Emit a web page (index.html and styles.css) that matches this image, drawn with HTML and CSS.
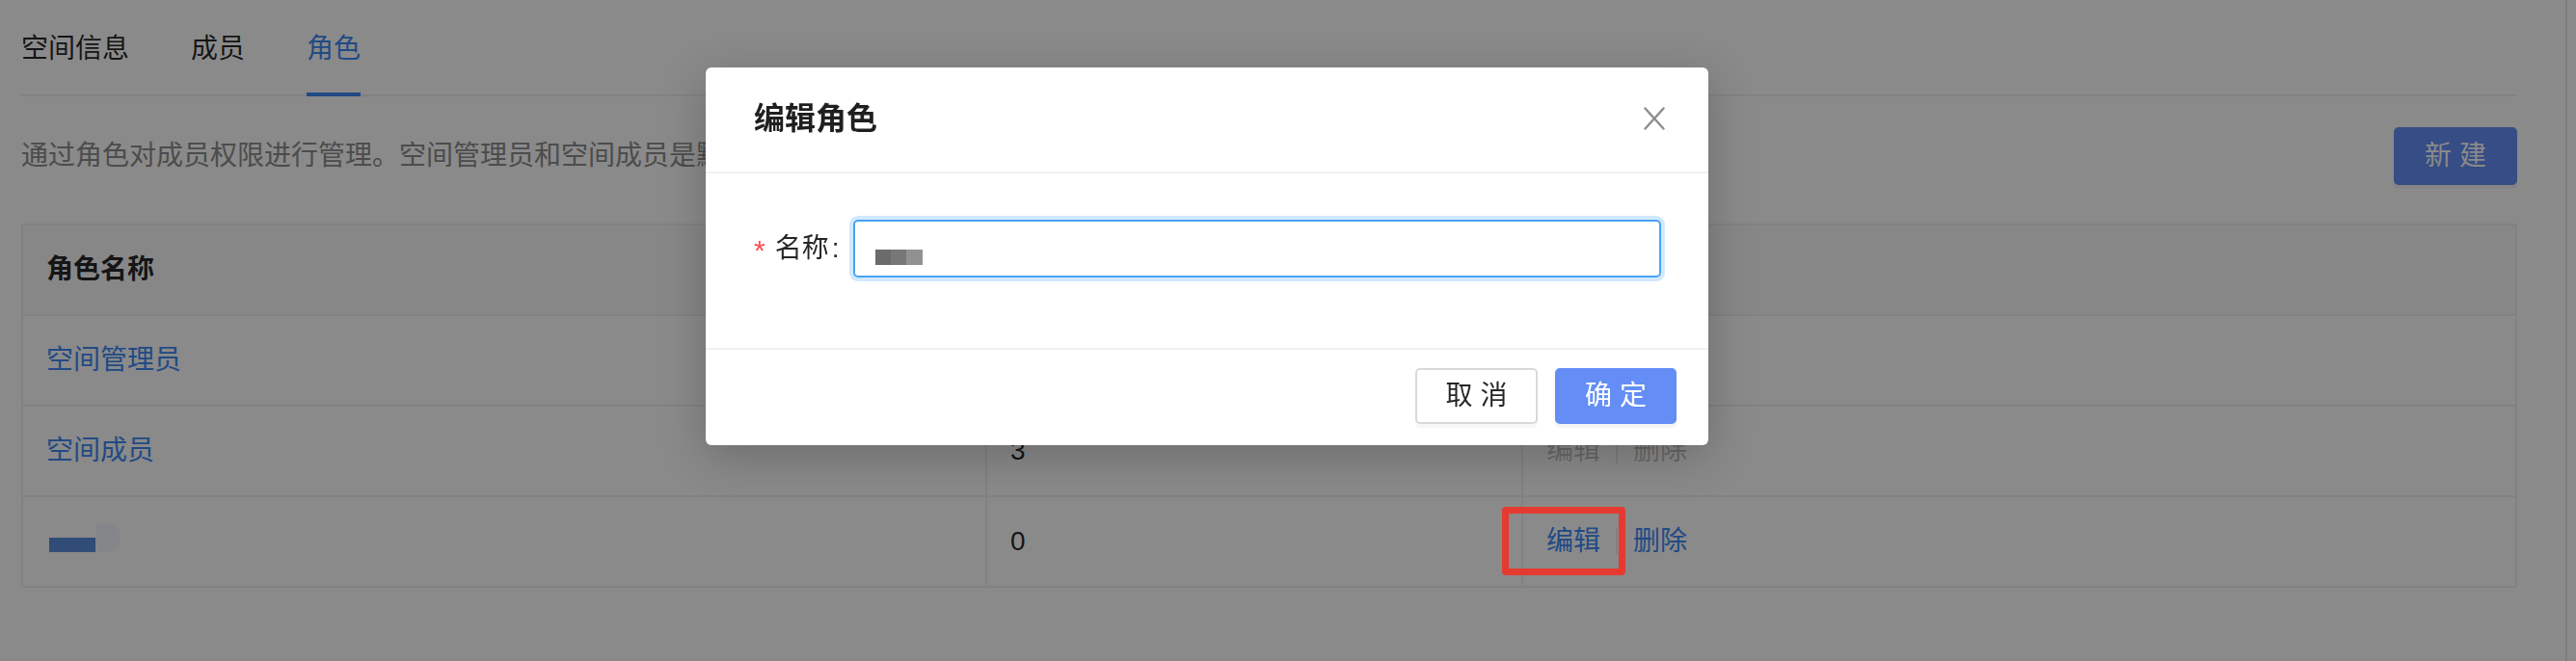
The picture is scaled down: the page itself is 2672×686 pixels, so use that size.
FILE: index.html
```html
<!DOCTYPE html>
<html lang="zh-CN">
<head>
<meta charset="utf-8">
<title>角色</title>
<link rel="stylesheet" href="styles.css">
</head>
<body>
<div class="app">
  <main class="page">
    <nav class="tabs">
      <div class="tab">空间信息</div>
      <div class="tab">成员</div>
      <div class="tab active">角色</div>
    </nav>

    <div class="toolbar">
      <p class="desc">通过角色对成员权限进行管理。空间管理员和空间成员是默认角色，不可编辑和删除。</p>
      <button class="btn btn-primary btn-new" type="button">新 建</button>
    </div>

    <div class="table" role="table">
      <div class="cell th" role="columnheader">角色名称</div>
      <div class="cell th" role="columnheader">成员数</div>
      <div class="cell th" role="columnheader">操作</div>

      <div class="cell" role="cell"><a class="link">空间管理员</a></div>
      <div class="cell" role="cell">1</div>
      <div class="cell" role="cell"><span class="ops"><span class="link disabled">编辑</span><span class="divider"></span><span class="link disabled">删除</span></span></div>

      <div class="cell" role="cell"><a class="link">空间成员</a></div>
      <div class="cell" role="cell">3</div>
      <div class="cell" role="cell"><span class="ops"><span class="link disabled">编辑</span><span class="divider"></span><span class="link disabled">删除</span></span></div>

      <div class="cell" role="cell"><span class="redact-name"><span class="redact-bar"></span><span class="redact-fade"></span></span></div>
      <div class="cell" role="cell">0</div>
      <div class="cell" role="cell"><span class="ops"><a class="link">编辑</a><span class="divider"></span><a class="link">删除</a></span></div>
    </div>
  </main>
  <div class="gutter"></div>
</div>

<div class="mask"></div>

<div class="modal" role="dialog">
  <div class="modal-header">
    <div class="modal-title">编辑角色</div>
    <svg class="close" width="22" height="24" viewBox="0 0 22 24" aria-label="关闭">
      <path d="M1.5 1.5 L20.5 22.5 M20.5 1.5 L1.5 22.5" stroke="#8c8c8c" stroke-width="2.4" fill="none" stroke-linecap="round"/>
    </svg>
  </div>
  <div class="modal-body">
    <div class="form-row">
      <label class="form-label"><span class="req">*</span>名称<span class="colon">:</span></label>
      <div class="field"><span class="redact-input"></span></div>
    </div>
  </div>
  <div class="modal-footer">
    <button class="btn btn-default" type="button">取 消</button>
    <button class="btn btn-primary btn-ok" type="button">确 定</button>
  </div>
</div>

<div class="annotation"></div>
</body>
</html>
```

FILE: styles.css
```css
html, body {
  margin: 0;
  padding: 0;
}

body {
  background: #ffffff;
  font-family: "Liberation Sans", "Noto Sans CJK SC", sans-serif;
  font-size: 28px;
  color: rgba(0, 0, 0, 0.85);
  width: 2672px;
  height: 686px;
  overflow: hidden;
  position: relative;
}

.app {
  display: flex;
  min-height: 686px;
}

.page {
  flex: 1;
  min-width: 0;
  padding: 0 50px 0 22px;
}

.gutter {
  width: 9px;
  border-left: 2px solid #e8e8e8;
}

/* tabs */
.tabs {
  display: flex;
  gap: 64px;
  padding-top: 31px;
  border-bottom: 2px solid #f0f0f0;
}

.tab {
  position: relative;
  line-height: 40px;
  padding-bottom: 27px;
  color: rgba(0, 0, 0, 0.85);
}

.tab.active {
  color: #3d8af5;
}

.tab.active::after {
  content: "";
  position: absolute;
  left: 0;
  right: 0;
  bottom: -2px;
  height: 4px;
  background: #3d8af5;
}

/* toolbar */
.toolbar {
  display: flex;
  align-items: center;
  justify-content: space-between;
  margin-top: 32px;
}

.desc {
  margin: 0;
  line-height: 40px;
  color: #8c8c8c;
}

.btn {
  font-family: "Liberation Sans", "Noto Sans CJK SC", sans-serif;
  font-size: 28px;
  border-radius: 5px;
  cursor: pointer;
  padding: 0;
  line-height: 40px;
}

.btn-primary {
  background: #648ef5;
  color: #ffffff;
  border: 2px solid #648ef5;
  box-shadow: 0 4px 0 rgba(0, 0, 0, 0.045);
}

.btn-default {
  background: #ffffff;
  color: rgba(0, 0, 0, 0.85);
  border: 2px solid #d9d9d9;
  box-shadow: 0 4px 0 rgba(0, 0, 0, 0.03);
}

.btn-new {
  width: 128px;
  height: 60px;
}

/* table */
.table {
  margin-top: 40px;
  display: grid;
  grid-template-columns: 1000px 556px 1fr;
  border-top: 2px solid #f0f0f0;
  border-left: 2px solid #f0f0f0;
}

.cell {
  box-sizing: border-box;
  height: 94px;
  display: flex;
  align-items: center;
  padding-left: 24px;
  border-right: 2px solid #f0f0f0;
  border-bottom: 2px solid #f0f0f0;
  line-height: 40px;
}

.th {
  background: #fafafa;
  font-weight: 600;
}

.link {
  color: #3d8af5;
  text-decoration: none;
  cursor: pointer;
}

.link.disabled {
  color: rgba(0, 0, 0, 0.25);
  cursor: not-allowed;
}

.ops {
  display: flex;
  align-items: center;
}

.divider {
  display: inline-block;
  width: 2px;
  height: 26px;
  margin: 0 16px;
  background: rgba(0, 0, 0, 0.08);
}

.redact-name {
  display: inline-flex;
  align-items: flex-end;
  margin-left: 3px;
  margin-bottom: 8px;
}

.redact-bar {
  display: inline-block;
  width: 48px;
  height: 15px;
  background: #5b8fdc;
}

.redact-fade {
  display: inline-block;
  width: 26px;
  height: 30px;
  border-radius: 0 15px 15px 0;
  background: #f4f7fd;
}

/* overlay */
.mask {
  position: fixed;
  inset: 0;
  background: rgba(0, 0, 0, 0.46);
  z-index: 10;
}

.modal {
  position: absolute;
  left: 732px;
  top: 70px;
  width: 1040px;
  background: #ffffff;
  border-radius: 6px;
  box-shadow: 0 12px 48px rgba(0, 0, 0, 0.22);
  z-index: 20;
}

.modal-header {
  box-sizing: border-box;
  height: 110px;
  display: flex;
  align-items: center;
  justify-content: space-between;
  padding: 0 45px 2px 50px;
  border-bottom: 2px solid #f0f0f0;
}

.modal-title {
  font-size: 32px;
  line-height: 44px;
  font-weight: 600;
  color: rgba(0, 0, 0, 0.88);
}

.close {
  display: block;
}

.modal-body {
  padding: 48px 49px 73px 50px;
}

.form-row {
  display: flex;
  align-items: center;
}

.form-label {
  display: flex;
  align-items: center;
  line-height: 40px;
  color: rgba(0, 0, 0, 0.85);
}

.req {
  color: #ff4d4f;
  margin-right: 10px;
  font-size: 30px;
  position: relative;
  top: 2px;
}

.colon {
  margin: 0 15px 0 3px;
}

.field {
  flex: 1;
  box-sizing: border-box;
  height: 60px;
  border: 2px solid #4aa3f7;
  border-radius: 5px;
  box-shadow: 0 0 0 4px rgba(24, 144, 255, 0.2);
  display: flex;
  align-items: center;
  padding-left: 21px;
}

.redact-input {
  display: inline-block;
  width: 49px;
  height: 16px;
  margin-top: 18px;
  background: linear-gradient(to right, #6b6b6b 0 33%, #777777 33% 66%, #919191 66% 100%);
}

.modal-footer {
  display: flex;
  justify-content: flex-end;
  gap: 18px;
  padding: 19px 33px 22px;
  border-top: 2px solid #f0f0f0;
}

.modal-footer .btn {
  height: 58px;
}

.btn-default {
  width: 127px;
}

.btn-ok {
  width: 126px;
}

/* annotation */
.annotation {
  position: absolute;
  left: 1558px;
  top: 526px;
  width: 128px;
  height: 71px;
  box-sizing: border-box;
  border: 7px solid #e53a30;
  border-radius: 4px;
  z-index: 30;
}
```
